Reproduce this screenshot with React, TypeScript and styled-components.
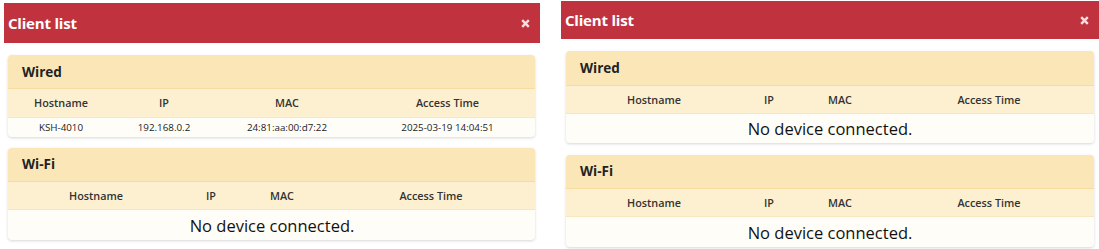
import React from 'react'
import styled, { createGlobalStyle } from 'styled-components'

const GlobalStyle = createGlobalStyle`
  html, body {
    margin: 0;
    padding: 0;
    background: #ffffff;
    font-family: 'Open Sans', 'Noto Sans', sans-serif;
  }
`

const Page = styled.div`
  display: flex;
  align-items: flex-start;
  width: 1099px;
  height: 249px;
  overflow: hidden;
`

const Dialog = styled.div<{ $left: number; $top: number; $width: number }>`
  margin-left: ${({ $left }) => $left}px;
  margin-top: ${({ $top }) => $top}px;
  width: ${({ $width }) => $width}px;
  flex-shrink: 0;
  background: #ffffff;
`

const Header = styled.div<{ $height: number }>`
  display: flex;
  align-items: center;
  justify-content: space-between;
  height: ${({ $height }) => $height}px;
  padding: 0 10px 0 4px;
  background: #c1323f;
  color: #ffffff;
`

const Title = styled.div`
  font-size: 15px;
  font-weight: 700;
  letter-spacing: -0.2px;
`

const Close = styled.svg`
  width: 9px;
  height: 9px;
  display: block;
`

const Body = styled.div<{ $pad: number; $gap: number }>`
  display: flex;
  flex-direction: column;
  gap: ${({ $gap }) => $gap}px;
  padding: 12px 5px 0 ${({ $pad }) => $pad}px;
`

const Panel = styled.div`
  background: #fffdf8;
  border-radius: 4px;
  box-shadow: 0 1px 3px rgba(0, 0, 0, 0.16);
  overflow: hidden;
`

const PanelHeading = styled.div<{ $height: number }>`
  display: flex;
  align-items: center;
  height: ${({ $height }) => $height}px;
  padding-left: 14px;
  background: #fbe6b8;
  border-bottom: 1px solid #f7dca2;
  font-size: 13.5px;
  font-weight: 700;
  color: #222222;
`

const Table = styled.table`
  width: 100%;
  border-collapse: collapse;
  table-layout: fixed;
`

const Col = styled.col<{ $w: number }>`
  width: ${({ $w }) => $w}px;
`

const HeadRow = styled.tr<{ $height: number }>`
  height: ${({ $height }) => $height}px;
  background: #fdf0d1;
  border-bottom: 1px solid #f7e6c0;
`

const Th = styled.th`
  padding: 0;
  font-size: 10.8px;
  font-weight: 600;
  color: #333333;
  text-align: center;
`

const Td = styled.td<{ $height: number }>`
  height: ${({ $height }) => $height}px;
  padding: 0;
  font-size: 9.8px;
  color: #222222;
  text-align: center;
`

const Empty = styled.td<{ $height: number }>`
  height: ${({ $height }) => $height}px;
  padding: 0;
  font-size: 16.5px;
  color: #111111;
  text-align: center;
`

type Client = { host: string; ip: string; mac: string; time: string }

type SectionProps = {
  name: string
  clients: Client[]
  cols: number[]
  headingH: number
  headH: number
  rowH: number
}

const columns = ['Hostname', 'IP', 'MAC', 'Access Time']

const CloseIcon = () => (
  <Close viewBox="0 0 9 9">
    <path d="M1.2 1.2 L7.8 7.8 M7.8 1.2 L1.2 7.8" stroke="rgba(255,255,255,0.85)" strokeWidth="2.4" />
  </Close>
)

const Section = ({ name, clients, cols, headingH, headH, rowH }: SectionProps) => (
  <Panel>
    <PanelHeading $height={headingH}>{name}</PanelHeading>
    <Table>
      <colgroup>
        {cols.map((w, i) => (
          <Col key={i} $w={w} />
        ))}
      </colgroup>
      <thead>
        <HeadRow $height={headH}>
          {columns.map((c) => (
            <Th key={c}>{c}</Th>
          ))}
        </HeadRow>
      </thead>
      <tbody>
        {clients.length === 0 ? (
          <tr>
            <Empty colSpan={4} $height={rowH}>
              No device connected.
            </Empty>
          </tr>
        ) : (
          clients.map((c) => (
            <tr key={c.mac}>
              <Td $height={rowH}>{c.host}</Td>
              <Td $height={rowH}>{c.ip}</Td>
              <Td $height={rowH}>{c.mac}</Td>
              <Td $height={rowH}>{c.time}</Td>
            </tr>
          ))
        )}
      </tbody>
    </Table>
  </Panel>
)

const wired: Client[] = [
  { host: 'KSH-4010', ip: '192.168.0.2', mac: '24:81:aa:00:d7:22', time: '2025-03-19 14:04:51' },
]

const emptyCols = [176, 54, 88, 210]

const App = () => (
  <>
    <GlobalStyle />
    <Page>
      <Dialog $left={4} $top={3} $width={536}>
        <Header $height={40}>
          <Title>Client list</Title>
          <CloseIcon />
        </Header>
        <Body $pad={4} $gap={11}>
          <Section name="Wired" clients={wired} cols={[106, 100, 146, 175]} headingH={33} headH={28} rowH={19} />
          <Section name="Wi-Fi" clients={[]} cols={emptyCols} headingH={33} headH={28} rowH={30} />
        </Body>
      </Dialog>
      <Dialog $left={21} $top={1} $width={538}>
        <Header $height={38}>
          <Title>Client list</Title>
          <CloseIcon />
        </Header>
        <Body $pad={5} $gap={12}>
          <Section name="Wired" clients={[]} cols={emptyCols} headingH={34} headH={27} rowH={29} />
          <Section name="Wi-Fi" clients={[]} cols={emptyCols} headingH={33} headH={28} rowH={30} />
        </Body>
      </Dialog>
    </Page>
  </>
)

export default App
